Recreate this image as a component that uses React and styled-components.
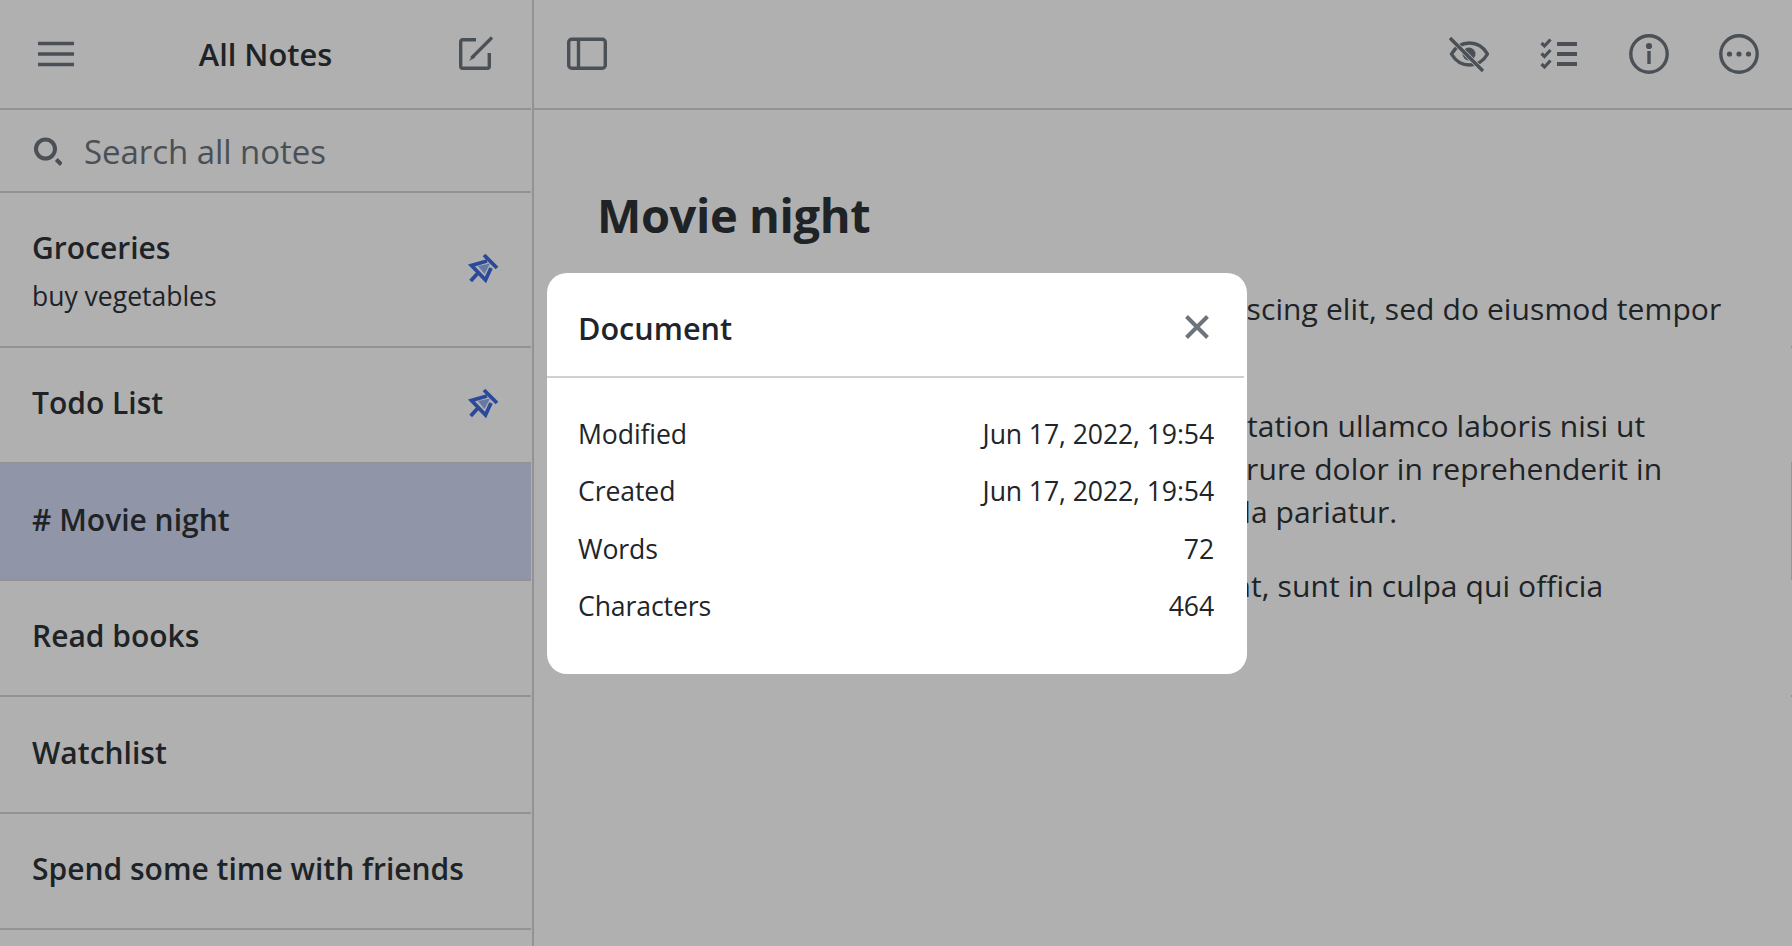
import React from "react";
import styled, { createGlobalStyle } from "styled-components";

const Global = createGlobalStyle`
  html, body { margin: 0; padding: 0; height: 100%; background: #fff; overflow: hidden; }
  * { box-sizing: border-box; }
  body { font-family: "Open Sans", "Noto Sans", sans-serif; color: #2d3338; }
`;

const Page = styled.div`
  display: flex;
  height: 946px;
  width: 1792px;
  overflow: hidden;
`;
const Sidebar = styled.aside`
  flex: 0 0 534px;
  border-right: 2px solid #d6d6d6;
  display: flex;
  flex-direction: column;
`;
const SideHeader = styled.header`
  height: 110px;
  flex: none;
  margin-right: 1px;
  border-bottom: 2px solid #d6d6d6;
  padding: 0 36px;
  display: flex;
  align-items: center;
  justify-content: space-between;
`;
const SideTitle = styled.h1`
  margin: 0;
  font-size: 30.8px;
  font-weight: 600;
`;
const SearchBar = styled.div`
  height: 83px;
  flex: none;
  margin-right: 1px;
  border-bottom: 2px solid #d6d6d6;
  padding: 0 32px;
  display: flex;
  align-items: center;
  gap: 22px;
  color: #6c757d;
`;
const SearchText = styled.span`
  font-size: 33px;
  letter-spacing: -0.05px;
  margin-top: 1px;
`;
const NoteList = styled.ul`
  list-style: none;
  margin: 0 1px 0 0;
  padding: 0;
`;
const NoteRow = styled.li`
  height: ${(p) => p.$h}px;
  padding: 0 31px 0 32px;
  border-bottom: 2px solid #d6d6d6;
  background: ${(p) => (p.$active ? "#d1d8f4" : "transparent")};
  display: flex;
  align-items: center;
  justify-content: space-between;
`;
const NoteText = styled.div`
  display: flex;
  flex-direction: column;
  gap: ${(p) => (p.$two ? "11px" : "0")};
  margin-top: ${(p) => (p.$two ? "1px" : "0")};
  margin-bottom: ${(p) => (p.$two ? "0" : "4px")};
`;
const NoteTitle = styled.div`
  font-size: 30px;
  font-weight: 600;
  line-height: 40px;
`;
const NoteSub = styled.div`
  font-size: 26.5px;
  line-height: 34px;
`;
const PinWrap = styled.span`
  display: flex;
  margin-bottom: 2px;
  color: #3d6bdf;
`;
const Main = styled.main`
  flex: 1;
  display: flex;
  flex-direction: column;
  min-width: 0;
`;
const Toolbar = styled.div`
  height: 110px;
  flex: none;
  border-bottom: 2px solid #d6d6d6;
  padding: 0 33px 1px;
  display: flex;
  align-items: center;
  justify-content: space-between;
`;
const ToolGroup = styled.div`
  display: flex;
  align-items: center;
  gap: 50px;
`;
const Editor = styled.article`
  padding: 73px 64px 0 63px;
`;
const DocTitle = styled.h2`
  margin: 0 0 40px;
  font-size: 47px;
  line-height: 64px;
  font-weight: 700;
  letter-spacing: -0.4px;
`;
const Paragraph = styled.p`
  margin: 0 0 31px;
  padding-left: 1px;
  font-size: 30px;
  line-height: 43px;
  letter-spacing: 0.1px;
  white-space: nowrap;
`;
const EdgeSliver = styled.div`
  position: fixed;
  right: 0;
  top: 346px;
  width: 1px;
  height: 351px;
  background: linear-gradient(
    to bottom,
    #d6d6d6 0 2px,
    transparent 2px 116px,
    #d1d8f4 116px 234px,
    transparent 234px 349px,
    #d6d6d6 349px
  );
`;
const Backdrop = styled.div`
  position: fixed;
  inset: 0;
  background: rgba(0, 0, 0, 0.31);
`;
const Modal = styled.section`
  position: fixed;
  left: 547px;
  top: 273px;
  width: 700px;
  height: 401px;
  background: #fff;
  border-radius: 20px;
`;
const ModalHead = styled.div`
  height: 105px;
  margin-right: 3px;
  padding: 6px 35px 0 31px;
  border-bottom: 2px solid #cfd0d4;
  display: flex;
  align-items: center;
  justify-content: space-between;
  color: #212529;
`;
const ModalTitle = styled.h3`
  margin: 0;
  font-size: 30.6px;
  font-weight: 600;
`;
const CloseBtn = styled.button`
  all: unset;
  display: flex;
  margin-bottom: 2px;
  color: #6c757d;
`;
const InfoList = styled.dl`
  margin: 0;
  padding: 27px 33px 0 31px;
`;
const InfoRow = styled.div`
  display: flex;
  justify-content: space-between;
  height: 57.5px;
  align-items: center;
  color: #212529;
  font-size: 26.6px;
  letter-spacing: -0.1px;
`;
const InfoTerm = styled.dt``;
const InfoValue = styled.dd`
  margin: 0;
`;

const Svg = styled.svg`
  display: block;
  fill: none;
  stroke: currentColor;
`;
const IconBtn = styled.span`
  display: flex;
  color: #6c757d;
`;

const Menu = () => (
  <Svg width="40" height="40" viewBox="0 0 40 40" strokeWidth="3.6">
    <path d="M2 9.5h36M2 20h36M2 30.5h36" />
  </Svg>
);
const Compose = () => (
  <Svg width="40" height="40" viewBox="0 0 40 40" strokeWidth="3.4">
    <path d="M21 5.7H7.7a2 2 0 0 0-2 2V32.3a2 2 0 0 0 2 2H32.3a2 2 0 0 0 2-2V19" />
    <path d="M37 3.5 16.5 24" strokeWidth="3.2" />
    <path d="M17.6 21 14 27l6-3.6Z" fill="currentColor" stroke="none" />
  </Svg>
);
const Panel = () => (
  <Svg width="40" height="40" viewBox="0 0 40 40" strokeWidth="3.4">
    <rect x="1.7" y="5.2" width="36.6" height="29" rx="3" />
    <path d="M11.5 5v29" />
  </Svg>
);
const Search = () => (
  <Svg width="30" height="30" viewBox="0 0 30 30" strokeWidth="4">
    <circle cx="13.5" cy="13" r="9.5" />
    <path d="m24.3 23.5 5 5" />
  </Svg>
);
const Pin = () => (
  <Svg width="34" height="34" viewBox="0 0 34 34" strokeWidth="3.8">
    <path d="M18 3 31 16" />
    <path d="M21 9 5.500 13.500 19.500 28 25 16" strokeLinejoin="miter" />
    <path d="M4.700 29 11.500 21.500" />
    <path d="M12 14 24 11.500 18.500 22Z" fill="currentColor" fillOpacity="0.55" stroke="none" />
  </Svg>
);
const EyeOff = () => (
  <Svg width="40" height="40" viewBox="0 0 40 40" strokeWidth="3.4">
    <path d="M2.500 20c4-7 10-11 18-11s14 4 18 11c-4 7-10 11-18 11S6.500 27 2.500 20Z" />
    <circle cx="20" cy="20" r="6.500" fill="currentColor" stroke="none" />
    <path d="M1 4l33 33" stroke="#fff" strokeWidth="5" />
    <path d="M1 4l33 33" />
  </Svg>
);
const Checklist = () => (
  <Svg width="40" height="40" viewBox="0 0 40 40" strokeWidth="3.8">
    <path d="M18 10h20M18 20h20M18 30h20" />
    <path d="M2.500 9l3 3 6-6.500M2.500 19.500l3 3 6-6.500M2.500 30l3 3 6-6.500" strokeWidth="3.200" />
  </Svg>
);
const Info = () => (
  <Svg width="40" height="40" viewBox="0 0 40 40" strokeWidth="3.4">
    <circle cx="20" cy="20" r="18.200" />
    <path d="M20 17v13" />
    <circle cx="20" cy="12" r="1.400" fill="currentColor" />
  </Svg>
);
const More = () => (
  <Svg width="40" height="40" viewBox="0 0 40 40" strokeWidth="3.4">
    <circle cx="20" cy="20" r="18.200" />
    <circle cx="10.500" cy="20" r="2.600" fill="currentColor" stroke="none" />
    <circle cx="20" cy="20" r="2.600" fill="currentColor" stroke="none" />
    <circle cx="29.500" cy="20" r="2.600" fill="currentColor" stroke="none" />
  </Svg>
);
const Close = () => (
  <Svg width="24" height="24" viewBox="0 0 24 24" strokeWidth="4">
    <path d="M1.500 1.500l21 21M22.500 1.500l-21 21" />
  </Svg>
);

const notes = [
  { title: "Groceries", sub: "buy vegetables", pinned: true, h: 155 },
  { title: "Todo List", pinned: true, h: 116 },
  { title: "# Movie night", active: true, h: 117 },
  { title: "Read books", h: 116 },
  { title: "Watchlist", h: 117 },
  { title: "Spend some time with friends", h: 116 },
];
const info = [
  ["Modified", "Jun 17, 2022, 19:54"],
  ["Created", "Jun 17, 2022, 19:54"],
  ["Words", "72"],
  ["Characters", "464"],
];

export default function App() {
  return (
    <>
      <Global />
      <Page>
        <Sidebar>
          <SideHeader>
            <IconBtn><Menu /></IconBtn>
            <SideTitle>All Notes</SideTitle>
            <IconBtn><Compose /></IconBtn>
          </SideHeader>
          <SearchBar>
            <IconBtn><Search /></IconBtn>
            <SearchText>Search all notes</SearchText>
          </SearchBar>
          <NoteList>
            {notes.map((n) => (
              <NoteRow key={n.title} $h={n.h} $active={n.active}>
                <NoteText $two={!!n.sub}>
                  <NoteTitle>{n.title}</NoteTitle>
                  {n.sub && <NoteSub>{n.sub}</NoteSub>}
                </NoteText>
                {n.pinned && <PinWrap><Pin /></PinWrap>}
              </NoteRow>
            ))}
          </NoteList>
        </Sidebar>
        <Main>
          <Toolbar>
            <IconBtn><Panel /></IconBtn>
            <ToolGroup>
              <IconBtn><EyeOff /></IconBtn>
              <IconBtn><Checklist /></IconBtn>
              <IconBtn><Info /></IconBtn>
              <IconBtn><More /></IconBtn>
            </ToolGroup>
          </Toolbar>
          <Editor>
            <DocTitle>Movie night</DocTitle>
            <Paragraph>Lorem ipsum dolor sit amet, consectetur adipiscing elit, sed do eiusmod tempor<br />incididunt ut labore et dolore magna aliqua.</Paragraph>
            <Paragraph>Ut enim ad minim veniam, quis nostrud exercitation ullamco laboris nisi ut<br />aliquip ex ea commodo consequat. Duis aute irure dolor in reprehenderit in<br />voluptate velit esse cillum dolore eu fugiat nulla pariatur.</Paragraph>
            <Paragraph>Excepteur sint occaecat cupidatat non proident, sunt in culpa qui officia<br />deserunt mollit anim id est laborum.</Paragraph>
          </Editor>
        </Main>
      </Page>
      <EdgeSliver />
      <Backdrop />
      <Modal>
        <ModalHead>
          <ModalTitle>Document</ModalTitle>
          <CloseBtn><Close /></CloseBtn>
        </ModalHead>
        <InfoList>
          {info.map(([k, v]) => (
            <InfoRow key={k}>
              <InfoTerm>{k}</InfoTerm>
              <InfoValue>{v}</InfoValue>
            </InfoRow>
          ))}
        </InfoList>
      </Modal>
    </>
  );
}
